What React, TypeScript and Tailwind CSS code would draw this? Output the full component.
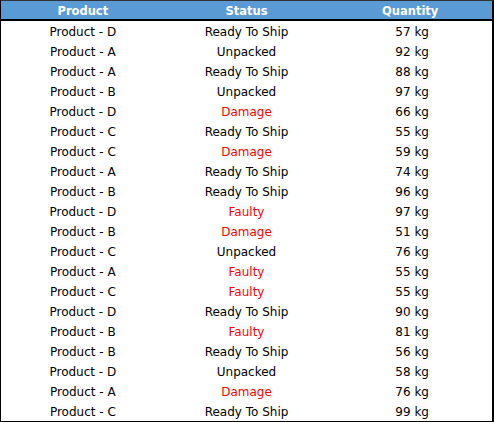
import React from "react";

const rows: [string, string, string][] = [
  ["Product - D", "Ready To Ship", "57 kg"],
  ["Product - A", "Unpacked", "92 kg"],
  ["Product - A", "Ready To Ship", "88 kg"],
  ["Product - B", "Unpacked", "97 kg"],
  ["Product - D", "Damage", "66 kg"],
  ["Product - C", "Ready To Ship", "55 kg"],
  ["Product - C", "Damage", "59 kg"],
  ["Product - A", "Ready To Ship", "74 kg"],
  ["Product - B", "Ready To Ship", "96 kg"],
  ["Product - D", "Faulty", "97 kg"],
  ["Product - B", "Damage", "51 kg"],
  ["Product - C", "Unpacked", "76 kg"],
  ["Product - A", "Faulty", "55 kg"],
  ["Product - C", "Faulty", "55 kg"],
  ["Product - D", "Ready To Ship", "90 kg"],
  ["Product - B", "Faulty", "81 kg"],
  ["Product - B", "Ready To Ship", "56 kg"],
  ["Product - D", "Unpacked", "58 kg"],
  ["Product - A", "Damage", "76 kg"],
  ["Product - C", "Ready To Ship", "99 kg"],
];

export default function App() {
  return (
    <div
      className="w-[494px] h-[422px] bg-white border-l border-b border-r-2 border-t border-l-black border-b-black border-r-black border-t-[#333] flex flex-col text-[12px] text-black"
      style={{ fontFamily: '"DejaVu Sans", Verdana, sans-serif' }}
    >
      <div className="grid grid-cols-3 h-[20px] bg-[#5b9bd5] border-b-2 border-black text-white font-bold text-[11.5px] pt-[2px] leading-[16px] text-center">
        <div>Product</div>
        <div>Status</div>
        <div>Quantity</div>
      </div>
      {rows.map((r, i) => {
        const red = r[1] === "Damage" || r[1] === "Faulty";
        return (
          <div key={i} className="grid grid-cols-3 h-[20px] pt-[2px] leading-[18px] text-center">
            <div>{r[0]}</div>
            <div className={red ? "text-[#ff0000]" : ""}>{r[1]}</div>
            <div className="pl-[4px]">{r[2]}</div>
          </div>
        );
      })}
    </div>
  );
}
